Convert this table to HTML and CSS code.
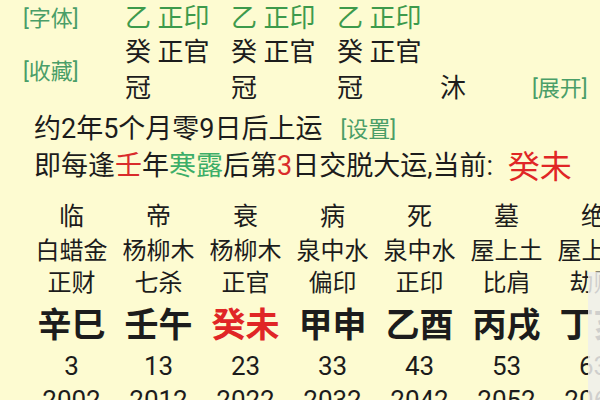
FILE: index.html
```html
<!DOCTYPE html>
<html lang="zh-CN">
<head>
<meta charset="utf-8">
<title>大运</title>
<link rel="stylesheet" href="styles.css">
</head>
<body>
<div class="page">
  <div class="pillars">
    <div class="lbl">[字体]</div>
    <div class="stem">乙 正印</div>
    <div class="stem">乙 正印</div>
    <div class="stem">乙 正印</div>
    <div class="blank"></div>
    <div class="blank"></div>

    <div class="lbl fav">[收藏]</div>
    <div class="hid">癸 正官</div>
    <div class="hid">癸 正官</div>
    <div class="hid">癸 正官</div>
    <div class="blank"></div>
    <div class="blank"></div>

    <div class="cs">冠</div>
    <div class="cs">冠</div>
    <div class="cs">冠</div>
    <div class="cs c4">沐</div>
    <div class="lbl more">[展开]</div>
  </div>

  <div class="info">
    <p class="line">约2年5个月零9日后上运<span class="lbl set">[设置]</span></p>
    <p class="line">即每逢<span class="red">壬</span>年<span class="green">寒露</span>后第<span class="red">3</span>日交脱大运,当前: <span class="cur">癸未</span></p>
  </div>

  <div class="luck">
    <div class="r1">临</div><div class="r1">帝</div><div class="r1">衰</div><div class="r1">病</div><div class="r1">死</div><div class="r1">墓</div><div class="r1">绝</div>
    <div class="r2">白蜡金</div><div class="r2">杨柳木</div><div class="r2">杨柳木</div><div class="r2">泉中水</div><div class="r2">泉中水</div><div class="r2">屋上土</div><div class="r2">屋上土</div>
    <div class="r3">正财</div><div class="r3">七杀</div><div class="r3">正官</div><div class="r3">偏印</div><div class="r3">正印</div><div class="r3">比肩</div><div class="r3">劫财</div>
    <div class="r4">辛巳</div><div class="r4">壬午</div><div class="r4 now">癸未</div><div class="r4">甲申</div><div class="r4">乙酉</div><div class="r4">丙戌</div><div class="r4">丁亥</div>
    <div class="r5">3</div><div class="r5">13</div><div class="r5">23</div><div class="r5">33</div><div class="r5">43</div><div class="r5">53</div><div class="r5">63</div>
    <div class="r6">2002</div><div class="r6">2012</div><div class="r6">2022</div><div class="r6">2032</div><div class="r6">2042</div><div class="r6">2052</div><div class="r6">2062</div>
  </div>

  <div class="overlay"></div>
</div>
</body>
</html>
```

FILE: styles.css
```css
html, body {
  margin: 0;
  padding: 0;
  overflow: hidden;
  width: 600px;
  height: 400px;
}

body {
  background: #fdfbd1;
  color: #1c1c1c;
  font-family: Roboto, "Noto Sans CJK SC", sans-serif;
}

.page {
  position: relative;
  width: 600px;
  height: 400px;
  overflow: hidden;
}

/* top pillar area */
.pillars {
  display: grid;
  grid-template-columns: 102px 106px 106px 106px 89px 1fr;
  grid-template-rows: 34px 33px 40px;
  padding: 2px 0 0 23px;
  align-items: center;
  font-size: 26px;
  line-height: 1.2;
  white-space: nowrap;
}

.lbl {
  color: #4a9e68;
  font-size: 22px;
}

.fav {
  grid-row: 2 / 4;
  grid-column: 1;
}

.stem {
  color: #3d9a4c;
}

.c4 {
  margin-left: -3px;
}

.more {
  justify-self: start;
}

/* luck start info */
.info {
  margin-top: 2px;
  padding-left: 34px;
}

.line {
  margin: 0;
  font-size: 27px;
  line-height: 37px;
  white-space: nowrap;
}

.set {
  margin-left: 18px;
  vertical-align: 1px;
}

.red {
  color: #d92b2b;
}

.green {
  color: #3cae68;
}

.cur {
  color: #e02626;
  font-size: 32px;
  line-height: 1;
  margin-left: 8px;
  vertical-align: -3px;
}

/* luck pillars table */
.luck {
  margin-top: 15px;
  padding-left: 28px;
  display: grid;
  grid-template-columns: repeat(7, 87px);
  grid-template-rows: 34px 34px 30px 54px 28px 40px;
  text-align: center;
  white-space: nowrap;
}

.r1 { font-size: 25px; line-height: 34px; }
.r2 { font-size: 24px; line-height: 34px; }
.r3 { font-size: 24px; line-height: 30px; }
.r4 { font-size: 34px; line-height: 54px; font-weight: bold; }
.r5 { font-size: 26px; line-height: 28px; }
.r6 { font-size: 26px; line-height: 40px; }

.now {
  color: #e02626;
}

/* translucent panel over the right edge */
.overlay {
  position: absolute;
  left: 588px;
  top: 272px;
  right: 0;
  bottom: 0;
  background: rgba(238, 238, 236, 0.85);
}
```
